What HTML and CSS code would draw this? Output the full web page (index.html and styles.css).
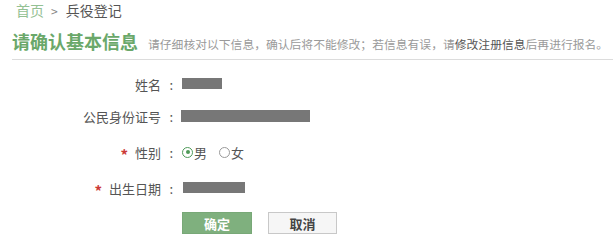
FILE: index.html
```html
<!DOCTYPE html>
<html lang="zh">
<head>
<meta charset="utf-8">
<title>兵役登记</title>
<link rel="stylesheet" href="styles.css">
</head>
<body>
<div class="crumb"><a class="home">首页</a><span class="sep">&gt;</span><span class="cur">兵役登记</span></div>
<div class="head">
  <h1 class="title">请确认基本信息</h1>
  <p class="sub">请仔细核对以下信息，确认后将不能修改；若信息有误，请<span class="lnk">修改注册信息</span>后再进行报名。</p>
</div>
<div class="rule"></div>
<div class="form">
  <div class="row">
    <div class="label">姓名<span class="colon">:</span></div>
    <div class="val"><span class="mask m1"></span></div>
  </div>
  <div class="row">
    <div class="label">公民身份证号<span class="colon">:</span></div>
    <div class="val"><span class="mask m2"></span></div>
  </div>
  <div class="row gap">
    <div class="label"><span class="req">*</span>性别<span class="colon">:</span></div>
    <div class="val">
      <span class="radio on"></span><span class="opt">男</span>
      <span class="radio"></span><span class="opt">女</span>
    </div>
  </div>
  <div class="row gap">
    <div class="label"><span class="req">*</span>出生日期<span class="colon">:</span></div>
    <div class="val"><span class="mask m4"></span></div>
  </div>
  <div class="btns">
    <button class="btn ok">确定</button>
    <button class="btn cancel">取消</button>
  </div>
</div>
</body>
</html>
```
FILE: styles.css
```css
html, body {
  margin: 0;
  padding: 0;
  background: #fff;
  font-family: "Noto Sans CJK SC", "Noto Sans", sans-serif;
}
.crumb {
  height: 20px;
  line-height: 20px;
  padding-left: 16px;
  font-size: 14px;
  color: #555;
}
.crumb .home { color: #94c193; }
.crumb .sep { color: #888; margin: 0 8px 0 7px; font-size: 12px; }
.crumb .cur { color: #555; }
.head {
  display: flex;
  align-items: baseline;
  margin: 9px 0 0 12px;
  height: 24px;
  white-space: nowrap;
}
.title {
  margin: 0;
  font-size: 18px;
  line-height: 24px;
  font-weight: bold;
  color: #6aa86a;
}
.sub {
  margin: 0 0 0 10px;
  font-size: 11.8px;
  color: #9a9a9a;
}
.sub .lnk { color: #555; }
.rule {
  margin: 6px 0 0 12px;
  border-top: 1px solid #dcdcdc;
}
.form { padding-top: 8px; }
.row {
  display: flex;
  align-items: center;
  height: 32px;
}
.row.gap { margin-top: 4px; }
.label {
  width: 178px;
  display: flex;
  justify-content: flex-end;
  align-items: center;
  font-size: 13px;
  color: #555;
  white-space: nowrap;
}
.colon {
  width: 17px;
  padding-right: 5px;
  box-sizing: border-box;
  text-align: right;
}
.req {
  color: #cc3a36;
  font-size: 15px;
  font-weight: bold;
  margin-right: 7px;
  line-height: 1;
  position: relative;
  top: 2px;
}
.val {
  display: flex;
  align-items: center;
  padding-left: 4px;
  font-size: 13px;
  color: #555;
}
.mask { display: block; background: #777; }
.m1 { width: 40px; height: 11px; margin-top: -1px; }
.m2 { width: 129px; height: 12px; margin-left: -1px; }
.m4 { width: 62px; height: 11px; margin-left: 1px; margin-top: -2px; }
.radio {
  box-sizing: border-box;
  width: 11px;
  height: 11px;
  border: 1px solid #999;
  border-radius: 50%;
  position: relative;
}
.radio.on { border-color: #4e9a58; }
.radio.on::after {
  content: "";
  position: absolute;
  left: 2.5px;
  top: 2.5px;
  width: 4px;
  height: 4px;
  border-radius: 50%;
  background: #4e9a58;
}
.opt { margin: 0 12px 0 1px; }
.btns {
  display: flex;
  gap: 16px;
  margin: 8px 0 0 182px;
}
.btn {
  box-sizing: border-box;
  height: 22px;
  padding: 0;
  font-family: inherit;
  font-size: 13px;
  font-weight: bold;
  border-radius: 0;
}
.btn.ok {
  width: 70px;
  background: #7fb07e;
  border: 1px solid #78a877;
  color: #fff;
}
.btn.cancel {
  width: 69px;
  background: #f6f6f6;
  border: 1px solid #c8c8c8;
  color: #444;
}
```
